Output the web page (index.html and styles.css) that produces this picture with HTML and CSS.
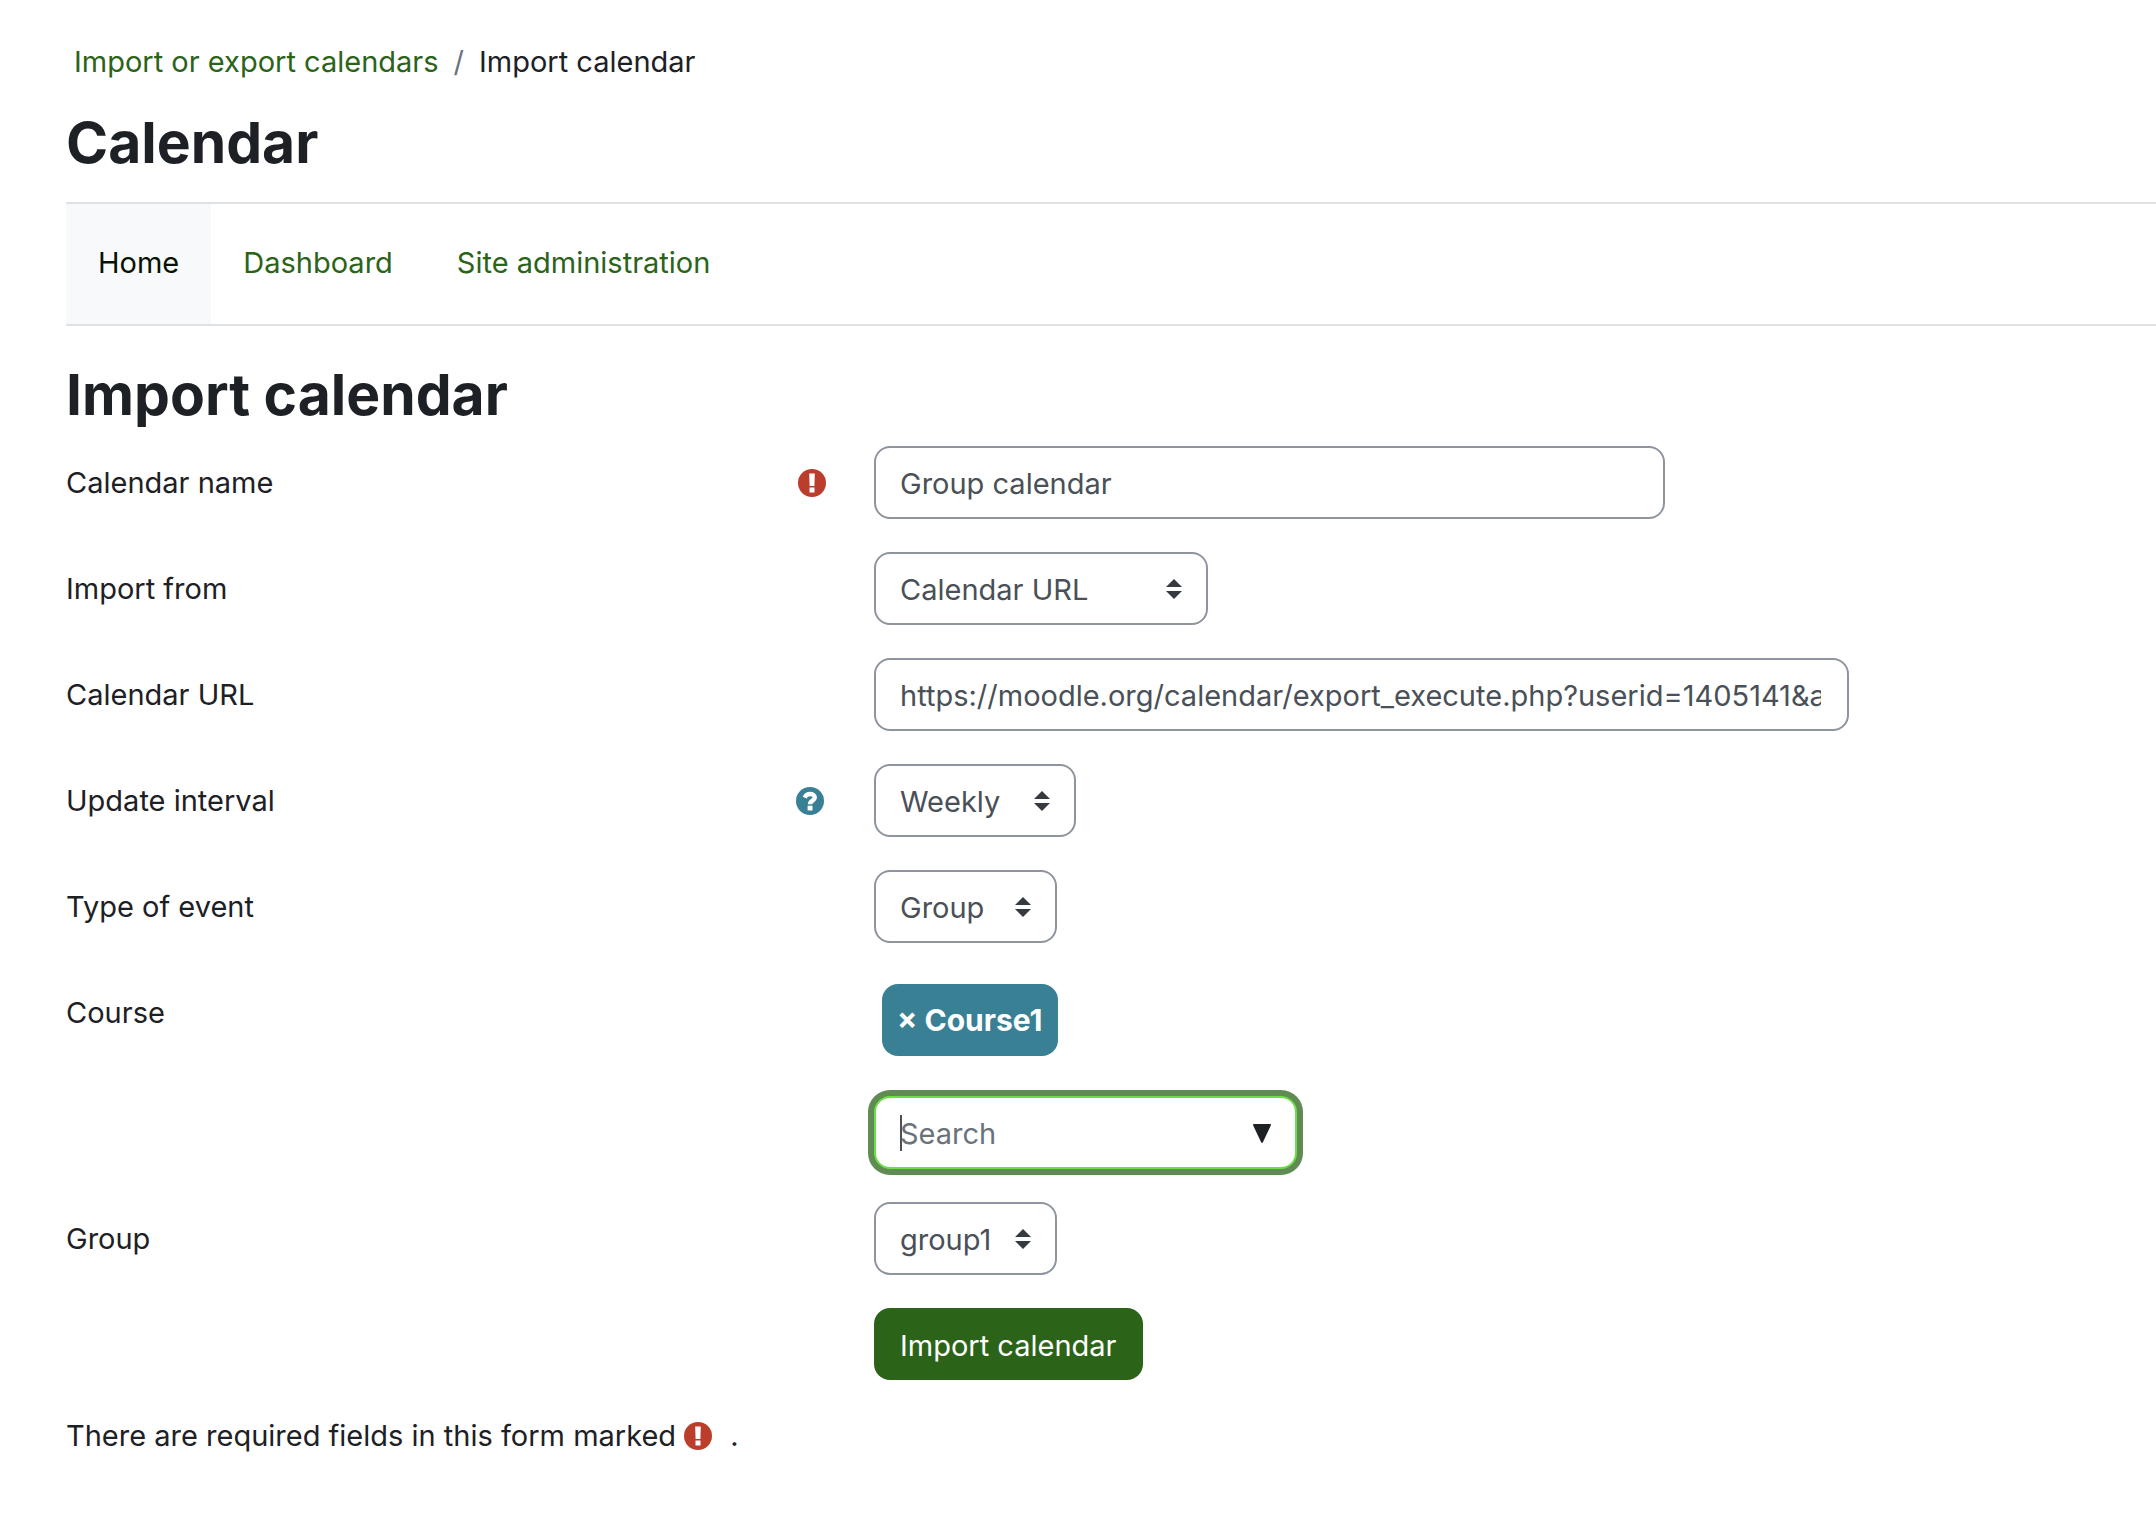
FILE: index.html
```html
<!DOCTYPE html>
<html lang="en">
<head>
  <meta charset="utf-8">
  <meta name="viewport" content="width=device-width, initial-scale=1">
  <title>Import calendar</title>
  <link rel="stylesheet" href="styles.css">
</head>
<body>
  <svg class="sprite" aria-hidden="true">
    <symbol id="icon-required" viewBox="0 0 28 28">
      <circle cx="14" cy="14" r="14" fill="currentColor"/>
      <path d="M11.2 4.400h5.600l-.4 12.600h-4.800z M11.500 18.600h5v4.800h-5z" fill="#fff"/>
    </symbol>
    <symbol id="icon-help" viewBox="0 0 28 28">
      <circle cx="14" cy="14" r="14" fill="currentColor"/>
      <path d="M8.700 10.700C9.800 8.200 11.600 7 14 7c2.700 0 4.800 1.400 4.800 3.600 0 3-4.800 3.100-4.800 6.600" fill="none" stroke="#fff" stroke-width="4.400"/>
      <path d="M11.600 18.700h4.900v4.800h-4.900z" fill="#fff"/>
    </symbol>
    <symbol id="icon-sort" viewBox="0 0 4 5">
      <path d="M2 0 0 2h4zM2 5 0 3h4z" fill="currentColor"/>
    </symbol>
  </svg>

  <div class="page">
    <nav class="breadcrumb" aria-label="Breadcrumb">
      <a class="link" href="#">Import or export calendars</a>
      <span class="breadcrumb-divider">/</span>
      <span>Import calendar</span>
    </nav>

    <h1 class="title">Calendar</h1>

    <nav class="tabs" aria-label="Site">
      <a class="tab tab-active" href="#" aria-current="page">Home</a>
      <a class="tab" href="#">Dashboard</a>
      <a class="tab" href="#">Site administration</a>
    </nav>

    <main>
      <h2 class="title">Import calendar</h2>
      <form class="form">
        <div class="row">
          <div class="row-label">
            <label for="name">Calendar name</label>
            <svg class="icon icon-danger" role="img" aria-label="Required"><use href="#icon-required"/></svg>
          </div>
          <input class="control control-name" id="name" type="text" value="Group calendar">
        </div>

        <div class="row">
          <div class="row-label"><label for="source">Import from</label></div>
          <div class="select select-wide">
            <select class="control" id="source"><option>Calendar URL</option></select>
            <svg class="select-arrows" aria-hidden="true"><use href="#icon-sort"/></svg>
          </div>
        </div>

        <div class="row">
          <div class="row-label"><label for="url">Calendar URL</label></div>
          <input class="control control-url" id="url" type="text" value="https://moodle.org/calendar/export_execute.php?userid=1405141&amp;authtoken=">
        </div>

        <div class="row">
          <div class="row-label row-label-help">
            <label for="interval">Update interval</label>
            <svg class="icon icon-info" role="img" aria-label="Help"><use href="#icon-help"/></svg>
          </div>
          <div class="select select-medium">
            <select class="control" id="interval"><option>Weekly</option></select>
            <svg class="select-arrows" aria-hidden="true"><use href="#icon-sort"/></svg>
          </div>
        </div>

        <div class="row">
          <div class="row-label"><label for="type">Type of event</label></div>
          <div class="select select-narrow">
            <select class="control" id="type"><option>Group</option></select>
            <svg class="select-arrows" aria-hidden="true"><use href="#icon-sort"/></svg>
          </div>
        </div>

        <div class="row">
          <div class="row-label"><label for="course">Course</label></div>
          <div class="course">
            <button class="chip" type="button">× Course1</button>
            <div class="search">
              <input class="control control-focused" id="course" type="text" placeholder="Search">
              <span class="caret"></span>
              <svg class="search-arrow" viewBox="0 0 18 19" aria-hidden="true"><path d="M1 0h16q1.500 0 .800 1.500L10 18q-1 2-2 0L.200 1.500Q-.500 0 1 0z" fill="currentColor"/></svg>
            </div>
          </div>
        </div>

        <div class="row">
          <div class="row-label"><label for="group">Group</label></div>
          <div class="select select-narrow">
            <select class="control" id="group"><option>group1</option></select>
            <svg class="select-arrows" aria-hidden="true"><use href="#icon-sort"/></svg>
          </div>
        </div>

        <div class="row">
          <button class="submit" type="submit">Import calendar</button>
        </div>
      </form>

      <p class="note">
        <span>There are required fields in this form marked</span>
        <svg class="icon icon-danger" role="img" aria-label="Required"><use href="#icon-required"/></svg>
        <span class="note-end">.</span>
      </p>
    </main>
  </div>
</body>
</html>
```

FILE: styles.css
```css
* {
  box-sizing: border-box;
}

body {
  margin: 0;
  background: #fff;
  color: #1d2125;
  font-family: Inter, "Liberation Sans", sans-serif;
  font-size: 29px;
  line-height: 45px;
}

input,
select,
button {
  font: inherit;
}

.sprite {
  display: none;
}

.page {
  padding: 39px 0 40px 66px;
}

.link,
.tab {
  color: #2b6419;
  text-decoration: none;
}

.breadcrumb {
  display: flex;
  gap: 15px;
  padding-left: 8px;
}

.breadcrumb-divider {
  color: #6a737b;
}

.title {
  margin: 0;
  font-size: 57px;
  font-weight: 700;
  line-height: 72px;
}

h1.title {
  margin: 23px 0;
}

.tabs {
  display: flex;
  margin-bottom: 33px;
  border-top: 2px solid #dee2e6;
  border-bottom: 2px solid #dee2e6;
}

.tab {
  padding: 36px 32px 39px;
}

.tab-active {
  background: #f8f9fb;
  color: #071200;
}

.form {
  display: flex;
  flex-direction: column;
  gap: 33px;
  padding-top: 15px;
}

.row {
  display: grid;
  grid-template-columns: 404fr 641fr;
  align-items: start;
}

.row-label {
  display: flex;
  justify-content: space-between;
  align-items: center;
  padding: 14px 48px 14px 0;
}

.row-label-help {
  padding-right: 50px;
}

.icon {
  width: 28px;
  height: 28px;
  flex: none;
}

.icon-danger {
  color: #bb3d2b;
}

.icon-info {
  color: #398095;
}

.control {
  display: block;
  width: 100%;
  height: 73px;
  padding: 2px 26px 0 24px;
  border: 2px solid #8f959e;
  border-radius: 16px;
  outline: 0;
  background: #fff;
  color: #495057;
  appearance: none;
}

.control::placeholder {
  color: #6a737b;
  opacity: 1;
}

.control-name {
  max-width: 791px;
}

.control-url {
  max-width: 975px;
}

.select {
  position: relative;
}

.select-wide {
  max-width: 334px;
}

.select-medium {
  max-width: 202px;
}

.select-narrow {
  max-width: 183px;
}

.select-arrows {
  position: absolute;
  top: 27px;
  right: 26px;
  width: 16px;
  height: 20px;
  color: #343a40;
  pointer-events: none;
}

.course {
  padding-top: 8px;
}

.chip {
  display: block;
  height: 72px;
  margin: 0 8px 40px;
  padding: 0 15px;
  border: 0;
  border-radius: 16px;
  background: #398095;
  color: #fff;
  font-size: 30px;
  font-weight: 700;
}

.search {
  position: relative;
  max-width: 423px;
}

.control-focused {
  border-color: #6adf46;
  box-shadow: 0 0 0 6px #608b52;
}

.caret {
  position: absolute;
  top: 19px;
  left: 26px;
  width: 2px;
  height: 36px;
  background: #495057;
}

.search-arrow {
  position: absolute;
  top: 28px;
  right: 26px;
  width: 18px;
  height: 19px;
  pointer-events: none;
}

.submit {
  grid-column: 2;
  justify-self: start;
  height: 72px;
  padding: 2px 26px 0;
  border: 0;
  border-radius: 16px;
  background: #2b6419;
  color: #fff;
}

.note {
  display: flex;
  align-items: center;
  gap: 8px;
  margin: 33px 0 0;
}

.note-end {
  padding-left: 10px;
}
```
